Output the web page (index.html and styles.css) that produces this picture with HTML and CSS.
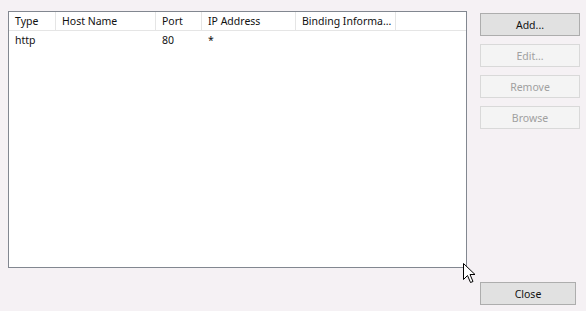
FILE: index.html
```html
<!DOCTYPE html>
<html lang="en">
<head>
  <meta charset="UTF-8">
  <title>Site Bindings</title>
  <link rel="stylesheet" href="styles.css">
</head>
<body>

<div class="dialog">
  <div class="main">
    <div class="list">
      <div class="row head">
        <div class="col c-type">Type</div>
        <div class="col c-host">Host Name</div>
        <div class="col c-port">Port</div>
        <div class="col c-ip">IP Address</div>
        <div class="col c-bind">Binding Informa...</div>
      </div>
      <div class="row item">
        <div class="col c-type">http</div>
        <div class="col c-host"></div>
        <div class="col c-port">80</div>
        <div class="col c-ip">*</div>
        <div class="col c-bind"></div>
      </div>
    </div>

    <div class="actions">
      <button class="btn">Add...</button>
      <button class="btn" disabled>Edit...</button>
      <button class="btn" disabled>Remove</button>
      <button class="btn" disabled>Browse</button>
    </div>
  </div>

  <div class="footer">
    <button class="btn close">Close</button>
  </div>
</div>

<svg class="cursor" width="13" height="21" viewBox="0 0 13 21">
  <path d="M0.5 0.5 L0.5 16.5 L4.5 12.5 L7.5 19.5 L10 18.5 L7 11.5 L12 11.5 Z" fill="#fff" stroke="#000" stroke-width="1"/>
</svg>

</body>
</html>
```

FILE: styles.css
```css
body {
  margin: 0;
  background: #f5f1f4;
  font-family: "Noto Sans", "Open Sans", sans-serif;
  font-size: 10.5px;
  color: #111;
}
.dialog {
  padding: 11px 0 0 8px;
}
.main {
  display: flex;
  gap: 13px;
}
.list {
  width: 457px;
  height: 255px;
  background: #fff;
  border: 1px solid #828790;
}
.row {
  display: flex;
}
.row.head {
  height: 18px;
  border-bottom: 1px solid #e5e5e5;
}
.row.head .col {
  border-right: 1px solid #e5e5e5;
}
.row.item {
  height: 18px;
}
.col {
  box-sizing: border-box;
  padding-left: 6px;
  line-height: 19px;
  white-space: nowrap;
  overflow: hidden;
}
.c-type { width: 47px; }
.c-host { width: 100px; }
.c-port { width: 46px; }
.c-ip { width: 94px; }
.c-bind { width: 100px; }

.actions {
  display: flex;
  flex-direction: column;
  gap: 8px;
  padding-top: 2px;
}
.btn {
  width: 100px;
  height: 23px;
  padding: 0;
  background: #e1e1e1;
  border: 1px solid #adadad;
  font-family: inherit;
  font-size: 10.5px;
  color: #111;
}
.btn:disabled {
  background: #f4f4f4;
  border-color: #d9d9d9;
  color: #a0a0a0;
}
.footer {
  display: flex;
  padding-left: 472px;
  margin-top: 14px;
}
.btn.close {
  width: 96px;
}
.cursor {
  position: absolute;
  left: 463px;
  top: 263px;
}
```
